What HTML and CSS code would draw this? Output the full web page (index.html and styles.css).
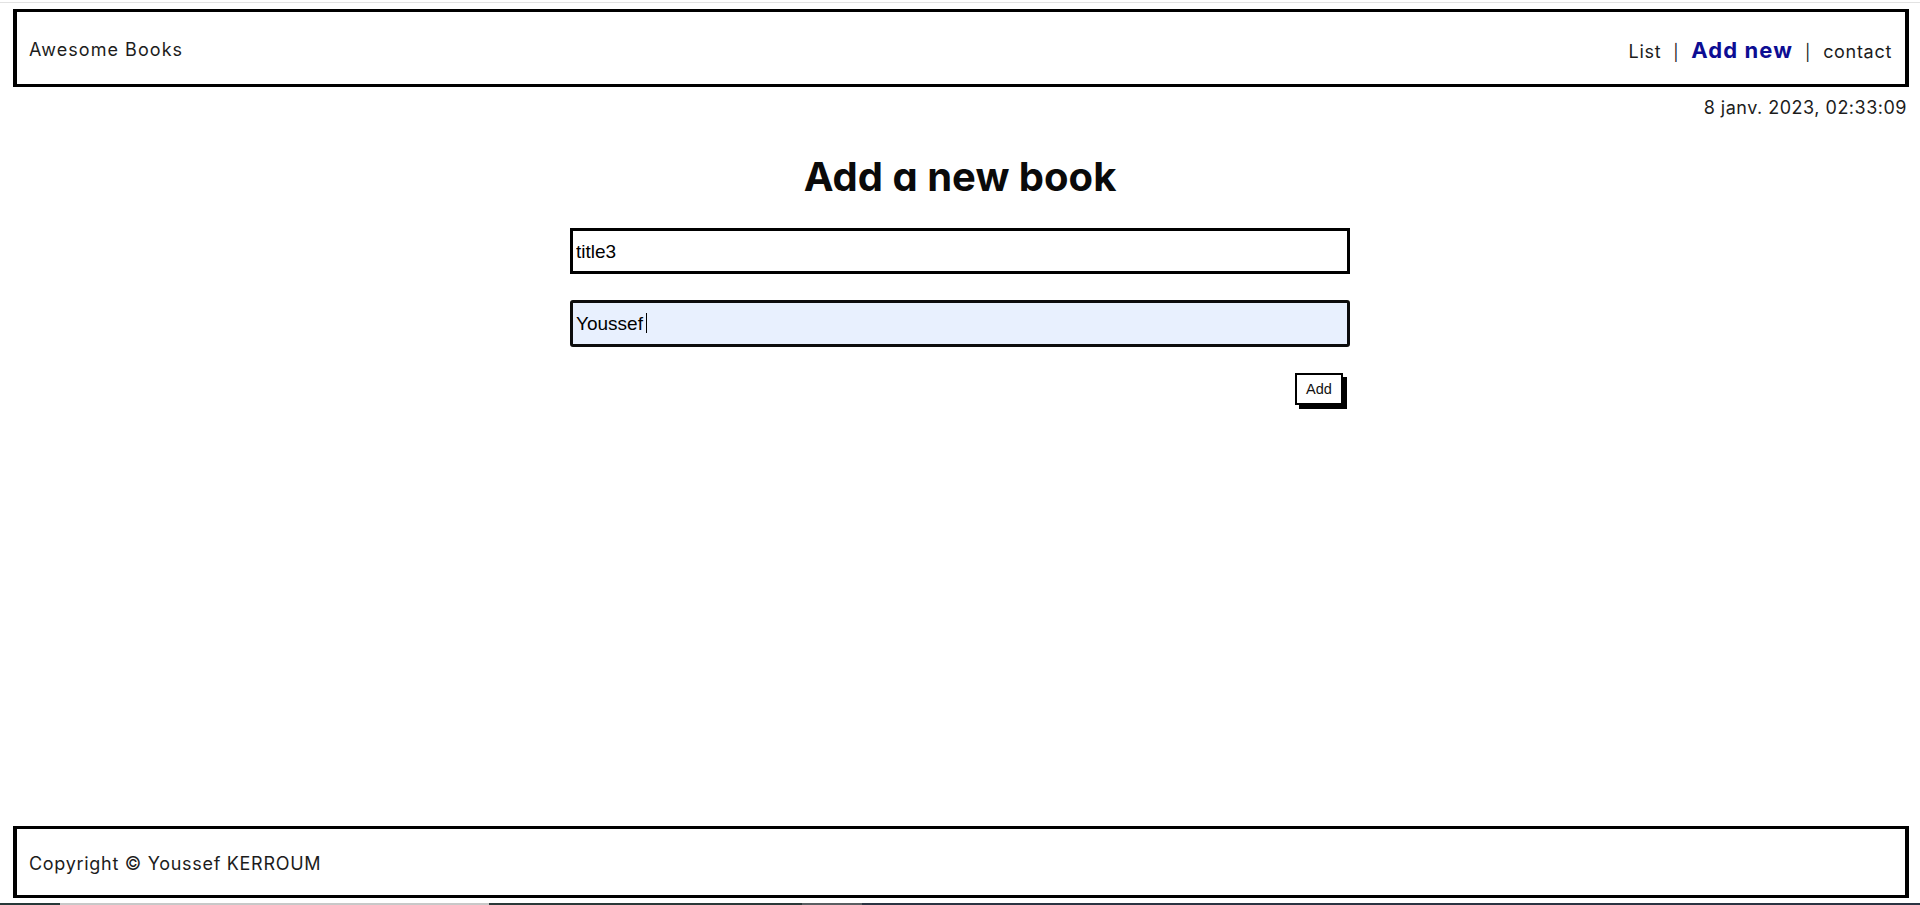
FILE: index.html
```html
<!DOCTYPE html>
<html lang="fr">
<head>
<meta charset="utf-8">
<title>Awesome Books</title>
<link rel="stylesheet" href="styles.css">
</head>
<body>
<div class="page">
  <div class="topline"></div>
  <header class="header">
    <span class="brand">Awesome Books</span>
    <nav class="nav">
      <a class="nav-link" href="#">List</a>
      <span class="sep">|</span>
      <a class="nav-link active" href="#">Add new</a>
      <span class="sep">|</span>
      <a class="nav-link" href="#">contact</a>
    </nav>
  </header>
  <div class="date">8 janv. 2023, 02:33:09</div>
  <main class="main">
    <h1 class="title">Add a new book</h1>
    <form class="form">
      <input class="field" type="text" value="title3">
      <div class="field-wrap">
        <input class="field field-focus" type="text" value="Youssef">
        <span class="caret"></span>
      </div>
      <div class="actions">
        <button class="btn" type="button">Add</button>
      </div>
    </form>
  </main>
  <footer class="footer">Copyright © Youssef KERROUM</footer>
  <div class="taskbar">
    <span class="seg seg-a"></span>
    <span class="seg seg-b"></span>
    <span class="seg seg-c"></span>
    <span class="seg seg-d"></span>
    <span class="seg seg-e"></span>
  </div>
</div>
</body>
</html>
```

FILE: styles.css
```css
* { box-sizing: border-box; }

html, body {
  margin: 0;
  padding: 0;
  background: #fff;
}

body {
  font-family: Inter, "Open Sans", sans-serif;
  color: #1c1c1c;
  letter-spacing: 0.7px;
}

.page {
  height: 905px;
  display: flex;
  flex-direction: column;
  overflow: hidden;
}

.topline {
  height: 1px;
  margin-top: 2px;
  background: #e2e2e2;
  flex: none;
}

.header {
  flex: none;
  height: 78px;
  margin: 6px 11px 0 13px;
  border: solid #000;
  border-width: 3px 4px;
  display: flex;
  align-items: center;
  justify-content: space-between;
  padding: 3px 13px 0 12px;
  font-size: 18px;
}

.brand {
  letter-spacing: 1.05px;
}

.nav {
  display: flex;
  align-items: baseline;
  gap: 12px;
}

.nav-link {
  color: #1c1c1c;
  text-decoration: none;
}

.nav-link.active {
  color: #0d0d93;
  font-weight: 700;
  font-size: 22px;
  letter-spacing: 1.1px;
}

.sep {
  font-size: 16px;
}

.date {
  flex: none;
  margin-top: 10px;
  padding-right: 13px;
  text-align: right;
  font-size: 18px;
  line-height: 22px;
  letter-spacing: 0.5px;
}

.main {
  flex: 1;
  display: flex;
  flex-direction: column;
  align-items: center;
}

.title {
  margin: 34px 0 0;
  font-size: 40px;
  line-height: 48px;
  font-weight: 700;
  letter-spacing: 0;
  font-feature-settings: "cv11" 1;
  color: #0a0a0a;
}

.form {
  width: 780px;
  margin-top: 27px;
  display: flex;
  flex-direction: column;
  gap: 26px;
  letter-spacing: 0;
}

.field-wrap {
  position: relative;
}

.field {
  display: block;
  width: 100%;
  height: 46px;
  border: 3px solid #000;
  padding: 1px 2px 0 3px;
  font-family: "Liberation Sans", Arial, sans-serif;
  font-size: 19px;
  color: #000;
  background: #fff;
  border-radius: 0;
  outline: none;
}

.field-focus {
  height: 47px;
  background: #e8f0fe;
  border-radius: 3px;
  border-color: #0c0c0c;
}

.caret {
  position: absolute;
  left: 76px;
  top: 13px;
  width: 1px;
  height: 20px;
  background: #000;
}

.actions {
  display: flex;
  justify-content: flex-end;
  padding-right: 7px;
}

.btn {
  width: 48px;
  height: 32px;
  border: 2px solid #000;
  background: #fff;
  box-shadow: 4px 4px 0 #000;
  font-family: "Liberation Sans", Arial, sans-serif;
  font-size: 14.5px;
  color: #111;
  padding: 0;
  margin-bottom: 4px;
}

.footer {
  flex: none;
  height: 72px;
  margin: 0 11px 0 13px;
  border: solid #000;
  border-width: 3px 4px;
  display: flex;
  align-items: center;
  padding: 3px 12px 0;
  font-size: 18px;
}

.taskbar {
  flex: none;
  margin-top: 5px;
  height: 2px;
  display: flex;
}

.seg { display: block; height: 2px; }
.seg-a { width: 60px; background: #263838; }
.seg-b { width: 429px; background: #c8c8c8; }
.seg-c { width: 313px; background: #2a3838; }
.seg-d { width: 60px; background: #5a5e62; }
.seg-e { flex: 1; background: #2b3342; }
```
